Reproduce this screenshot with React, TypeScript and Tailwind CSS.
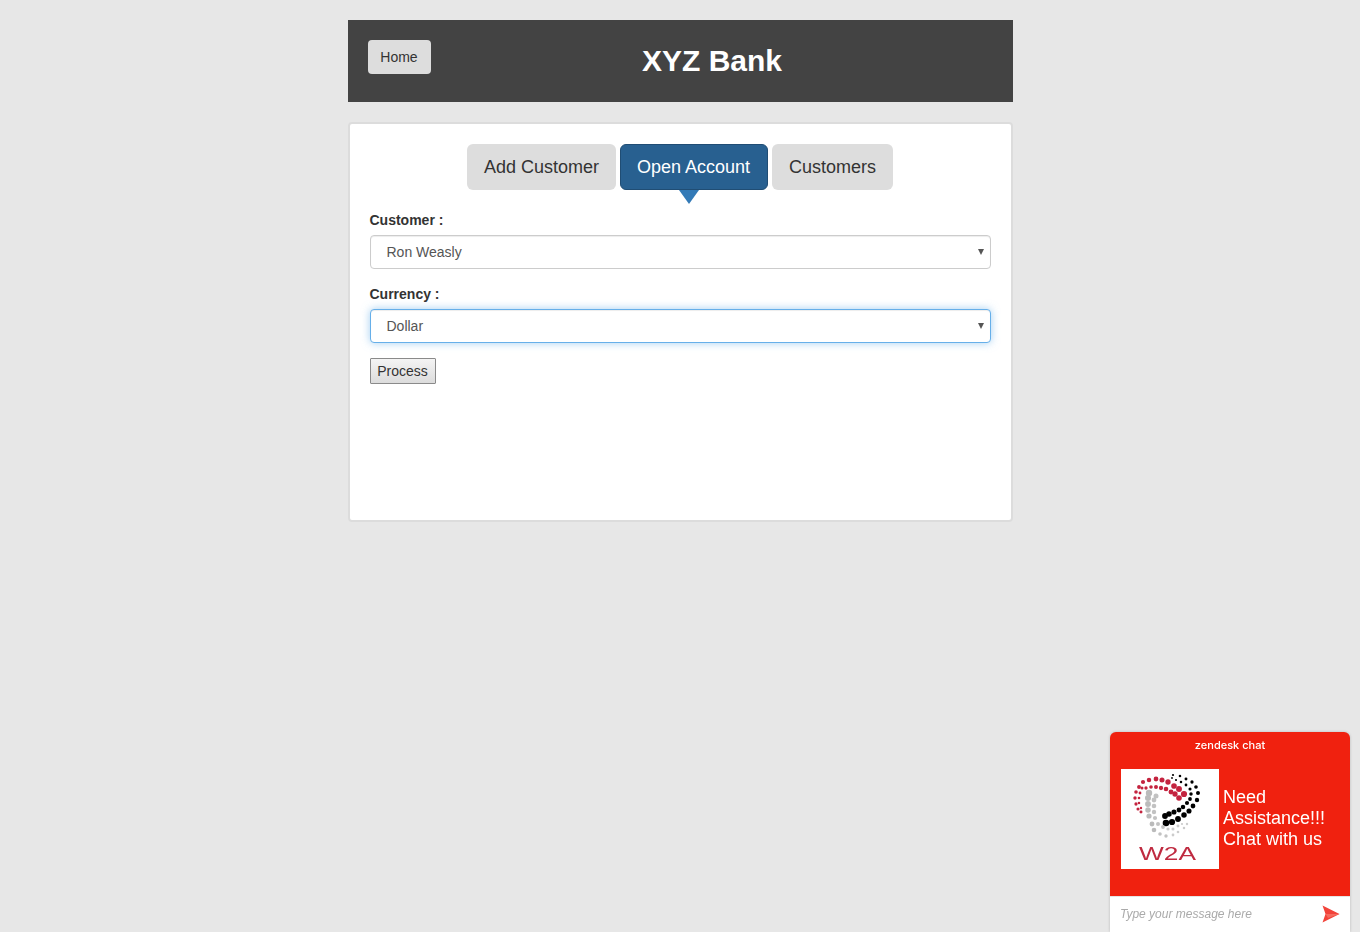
const redOuter = [[1136, 792], [1139, 787], [1143, 782], [1149, 780], [1156, 779], [1162, 780], [1168, 782], [1174, 786], [1179, 789], [1184, 794]];
const redInner = [[1142, 788], [1146, 788], [1151, 787], [1156, 787], [1161, 788], [1166, 789], [1171, 792], [1175, 794], [1179, 798]];
const redSmall = [[1135, 798], [1136, 804], [1138, 809], [1141, 812], [1140, 793], [1139, 798], [1139, 803], [1141, 808]];
const blackOuter = [[1173, 775], [1180, 776], [1186, 779], [1192, 782], [1196, 787], [1198, 793], [1197, 800], [1193, 806], [1189, 811], [1184, 815], [1178, 819], [1172, 822], [1166, 823]];
const blackInner = [[1172, 778], [1176, 780], [1181, 782], [1186, 785], [1190, 789], [1191, 794], [1190, 799], [1187, 803], [1183, 807], [1179, 810], [1174, 812], [1169, 814], [1165, 816]];
const grayBig = [[1149, 793], [1148, 798], [1148, 804], [1148, 810], [1149, 816], [1152, 824], [1154, 830]];
const grayMid = [[1156, 796], [1154, 800], [1154, 806], [1154, 812], [1155, 818], [1158, 824], [1163, 827], [1160, 834], [1166, 836]];
const graySmall = [[1168, 829], [1173, 829], [1178, 826], [1173, 835], [1178, 832], [1184, 828], [1187, 824], [1182, 824]];

function Dots({ points, from, to, fill }: { points: number[][]; from: number; to: number; fill: string }) {
    return (
        <>
            {points.map(([x, y], i) => (
                <circle key={`${x}-${y}`} cx={x - 1121} cy={y - 769} r={from + ((to - from) * i) / (points.length - 1)} fill={fill} />
            ))}
        </>
    );
}

function W2aLogo() {
    return (
        <svg width="98" height="100" viewBox="0 0 98 100" className="block">
            <rect width="98" height="100" fill="#ffffff" />
            <g className="blur-[0.4px]">
                <Dots points={redOuter} from={1.8} to={3.1} fill="#c4233f" />
                <Dots points={redInner} from={1.5} to={2.8} fill="#c4233f" />
                <Dots points={redSmall} from={1.7} to={1.2} fill="#c4233f" />
                <Dots points={blackOuter} from={1.1} to={3.3} fill="#000000" />
                <Dots points={blackInner} from={0.9} to={2.9} fill="#000000" />
                <Dots points={grayBig} from={3.2} to={2.3} fill="#bbbbbb" />
                <Dots points={grayMid} from={2.5} to={1.7} fill="#c2c2c2" />
                <Dots points={graySmall} from={1.6} to={1.1} fill="#cccccc" />
                <text
                    x="18"
                    y="91"
                    textLength="57"
                    lengthAdjust="spacingAndGlyphs"
                    fill="#bf2a40"
                    fontSize="18"
                    style={{ fontFamily: '"Liberation Sans", sans-serif' }}
                >
                    W2A
                </text>
            </g>
        </svg>
    );
}

function ChatWidget() {
    return (
        <div className="fixed right-[10px] bottom-0 flex h-[200px] w-[240px] flex-col overflow-hidden rounded-t-md bg-[#f0210f] shadow-[0_0_3px_rgba(0,0,0,0.2)]">
            <div className="pt-[6px] text-center font-['Inter',sans-serif] text-[11px] leading-[14px] font-medium text-white">
                zendesk chat
            </div>
            <div className="flex flex-1 items-start pt-[17px] pl-[11px]">
                <W2aLogo />
                <div className="mt-[18px] ml-[4px] text-[18px] leading-[21px] text-white">
                    Need
                    <br />
                    Assistance!!!
                    <br />
                    Chat with us
                </div>
            </div>
            <div className="flex h-[36px] items-center justify-between border-t border-[#e5e5e5] bg-white pr-[10px] pl-[10px]">
                <span className="text-[12px] text-[#aaaaaa] italic">Type your message here</span>
                <svg width="18" height="18" viewBox="0 0 18 18" className="-mt-[2px]">
                    <path d="M0.5 0.5 L17.5 9 L0.5 17.5 L3.5 9 Z" fill="#f2433a" />
                    <path d="M3.5 9 L17.5 9 L6 13 Z" fill="#f66a5e" />
                </svg>
            </div>
        </div>
    );
}

function SelectField({ label, value, focused }: { label: string; value: string; focused?: boolean }) {
    return (
        <div className="mb-[15px]">
            <label className="mb-[5px] block leading-5 font-bold">{label}</label>
            <div className="relative">
                <select
                    defaultValue={value}
                    className={
                        focused
                            ? 'block h-[34px] w-full appearance-none rounded border border-[#66afe9] bg-white py-[6px] pr-3 pl-4 text-sm text-[#555555] shadow-[inset_0_1px_1px_rgba(0,0,0,0.075),0_0_8px_rgba(102,175,233,0.6)]'
                            : 'block h-[34px] w-full appearance-none rounded border border-[#cccccc] bg-white py-[6px] pr-3 pl-4 text-sm text-[#555555] shadow-[inset_0_1px_1px_rgba(0,0,0,0.075)]'
                    }
                >
                    <option>{value}</option>
                </select>
                <span className="absolute top-[14px] right-[7px] h-0 w-0 border-x-[3px] border-t-[6px] border-x-transparent border-t-[#555555]" />
            </div>
        </div>
    );
}

export default function App() {
    return (
        <div className="min-h-[932px] bg-[#e7e7e7] pt-5 font-['Liberation_Sans',Arial,sans-serif] text-sm text-[#333333]">
            <div className="mx-auto w-[665px]">
                <header className="flex h-[82px] bg-[#434343]">
                    <button className="mt-5 ml-5 h-[34px] w-[63px] rounded bg-[#dddddd] text-sm text-[#333333]">Home</button>
                    <h1 className="-mt-[2px] flex-1 self-center pr-[19px] text-center text-[30px] leading-[33px] font-bold text-white">XYZ Bank</h1>
                </header>

                <main className="mt-5 h-[400px] rounded border-2 border-[#dcdcdc] bg-white p-5">
                    <div className="flex justify-center gap-1">
                        <button className="h-[46px] w-[149px] rounded-md bg-[#dddddd] pl-[17px] text-left text-lg text-[#333333]">Add Customer</button>
                        <button className="relative h-[46px] w-[148px] rounded-md border border-[#204d74] bg-[#286090] pl-4 text-left text-lg text-white">
                            Open Account
                            <span className="absolute top-[45px] left-[58px] h-0 w-0 border-x-[10px] border-t-[14px] border-x-transparent border-t-[#337ab7]" />
                        </button>
                        <button className="h-[46px] w-[121px] rounded-md bg-[#dddddd] pl-[17px] text-left text-lg text-[#333333]">Customers</button>
                    </div>

                    <form className="mt-5">
                        <SelectField label="Customer :" value="Ron Weasly" />
                        <SelectField label="Currency :" value="Dollar" focused />
                        <button
                            type="button"
                            className="h-[26px] w-[66px] rounded-[1px] border border-[#8a8a8a] bg-[linear-gradient(#f4f4f4,#dcdcdc)] text-sm text-[#333333]"
                        >
                            Process
                        </button>
                    </form>
                </main>
            </div>

            <ChatWidget />
        </div>
    );
}
